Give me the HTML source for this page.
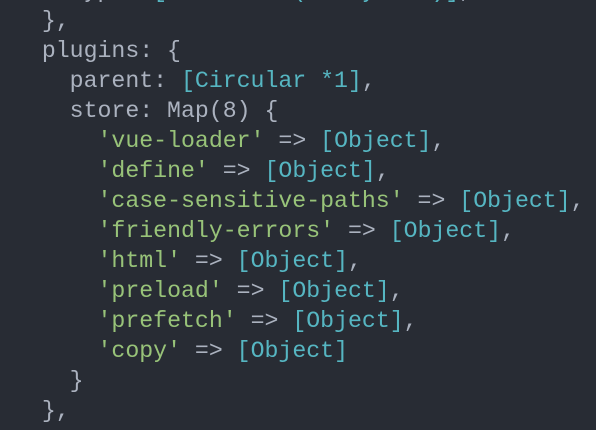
<html><head><style>
body{margin:0;width:596px;height:430px;background:#282c34;overflow:hidden}
pre{margin:0;position:absolute;top:-24px;left:14px;font-family:"Liberation Mono",monospace;font-size:23.2px;line-height:30px;color:#abb2bf}
.g{color:#98c379}.c{color:#56b6c2}
</style></head><body><pre>    type: <span class="c">[Function (anonymous)]</span>,
  },
  plugins: {
    parent: <span class="c">[Circular *1]</span>,
    store: Map(8) {
      <span class="g">'vue-loader'</span> =&gt; <span class="c">[Object]</span>,
      <span class="g">'define'</span> =&gt; <span class="c">[Object]</span>,
      <span class="g">'case-sensitive-paths'</span> =&gt; <span class="c">[Object]</span>,
      <span class="g">'friendly-errors'</span> =&gt; <span class="c">[Object]</span>,
      <span class="g">'html'</span> =&gt; <span class="c">[Object]</span>,
      <span class="g">'preload'</span> =&gt; <span class="c">[Object]</span>,
      <span class="g">'prefetch'</span> =&gt; <span class="c">[Object]</span>,
      <span class="g">'copy'</span> =&gt; <span class="c">[Object]</span>
    }
  },
</pre></body></html>
